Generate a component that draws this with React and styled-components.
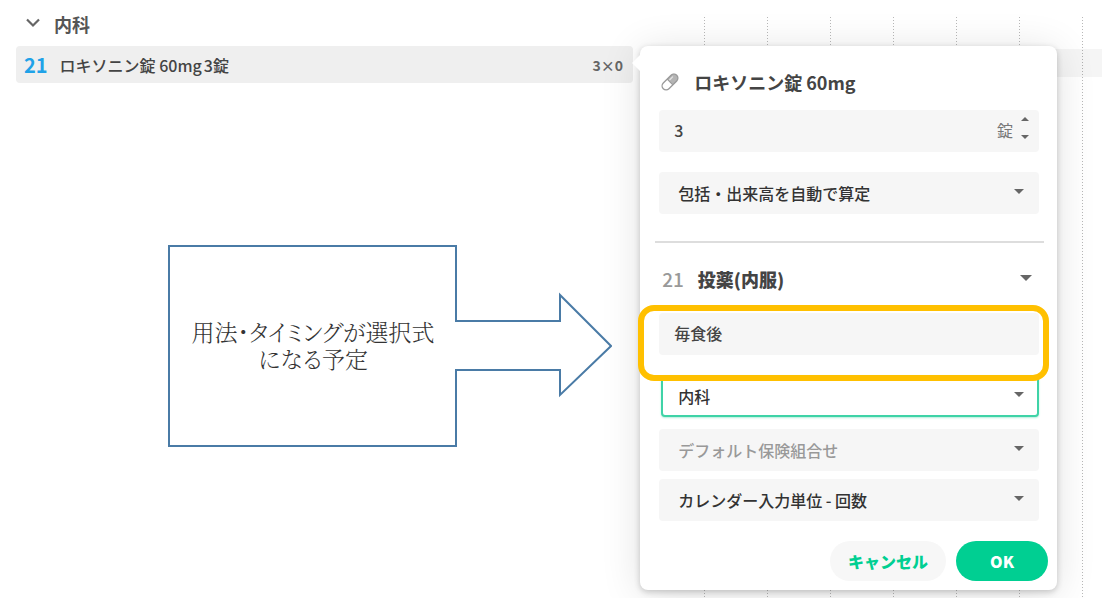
import { useState } from "react";
import styled, { createGlobalStyle } from "styled-components";

const GlobalStyle = createGlobalStyle`
  *, *::before, *::after { box-sizing: border-box; }

  body {
    margin: 0;
    background: #ffffff;
    color: #444444;
    font-family: 'Noto Sans CJK JP', sans-serif;
    font-size: 16px;
    line-height: 24px;
  }

  button, input, select {
    margin: 0;
    padding: 0;
    border: 0;
    background: none;
    color: inherit;
    font: inherit;
  }
`;

const Page = styled.main`
  display: grid;
  grid-template-columns: 4fr 3fr;
  min-height: 100vh;
  overflow: hidden;
`;

const Orders = styled.section`
  padding: 10px 0 0 16px;
`;

const DepartmentHeader = styled.button`
  display: flex;
  align-items: center;
  gap: 14px;
  height: 28px;
  padding-left: 10px;
  color: #555555;
  cursor: pointer;

  svg { margin-bottom: 3px; }

  h2 {
    margin: 0;
    font-size: 18px;
    font-weight: 700;
  }
`;

const OrderRow = styled.div`
  display: flex;
  align-items: center;
  height: 37px;
  margin-top: 8px;
  padding: 0 10px 0 8px;
  border-radius: 4px;
  background: #efefef;
  font-weight: 500;
`;

const OrderCode = styled.span`
  margin-right: 12px;
  color: #1fa2e8;
  font-size: 20px;
  font-weight: 700;
`;

const OrderName = styled.span`
  flex: 1;

  span { margin-left: 2px; }
`;

const OrderCount = styled.span`
  color: #666666;
  font-size: 14px;
  font-weight: 700;
`;

const Callout = styled.div`
  position: relative;
  width: 444px;
  height: 202px;
  margin: 162px 0 0 152px;

  svg { position: absolute; inset: 0; }
`;

const CalloutText = styled.p`
  position: relative;
  display: flex;
  align-items: center;
  justify-content: center;
  width: 290px;
  height: 100%;
  margin: 0;
  padding-bottom: 2px;
  color: #333333;
  font-family: 'Noto Serif CJK JP', 'Noto Sans CJK JP', serif;
  font-size: 23px;
  font-weight: 300;
  line-height: 27px;
  font-feature-settings: 'palt';
  text-align: center;
`;

const CalendarArea = styled.section`
  position: relative;
  padding: 17px 6px 0 8px;
`;

const Calendar = styled.div`
  height: 100%;
  margin-left: 63px;
  padding-top: 32px;
  background: linear-gradient(to bottom, transparent 1px, #ffffff 1px) 0 0 / 100% 3px,
    linear-gradient(to right, #b8b8b8 1px, transparent 1px) 0 0 / 63px 100%;
`;

const CalendarRow = styled.div`
  height: 28px;
  background: rgba(0, 0, 0, 0.04);
`;

const Popover = styled.form`
  position: absolute;
  top: 46px;
  left: 7px;
  right: 51px;
  padding: 22px 18px 9px 19px;
  border-radius: 8px;
  background: #ffffff;
  box-shadow: 0 2px 6px rgba(0, 0, 0, 0.2), 0 4px 40px rgba(0, 0, 0, 0.12);

  &::before {
    content: '';
    position: absolute;
    top: 9px;
    left: -8px;
    border: solid transparent;
    border-width: 8px 8px 8px 0;
    border-right-color: #ffffff;
  }
`;

const PopoverTitle = styled.h3`
  display: flex;
  align-items: center;
  gap: 15px;
  height: 28px;
  margin: 0 0 14px 2px;
  font-size: 18px;
  font-weight: 700;
`;

const Field = styled.div`
  position: relative;
  display: flex;
  align-items: center;
  height: 42px;
  margin-bottom: ${({ $gap }) => $gap || 0}px;
  border-radius: 4px;
  background: #f6f6f6;
  font-weight: 500;
`;

const TextInput = styled.input`
  flex: 1;
  min-width: 0;
  height: 100%;
  padding: 0 0 2px 15px;
  outline: none;
`;

const Unit = styled.span`
  padding-bottom: 2px;
  color: #777777;
  font-weight: 400;
`;

const Stepper = styled.div`
  display: flex;
  flex-direction: column;
  justify-content: space-between;
  height: 22px;
  margin: 0 10px 6px 8px;

  button {
    display: flex;
    cursor: pointer;
  }
`;

const SelectField = styled(Field)`
  color: ${({ $muted }) => ($muted ? "#999999" : "#333333")};

  ${({ $active }) => $active && `
    background: #ffffff;
    border: 2px solid #3fd3a7;
    box-shadow: 0 1px 2px #b5eedb;
    margin-left: 2px;
  `}

  select {
    width: 100%;
    height: 100%;
    padding: 0 36px 0 ${({ $active }) => ($active ? 15 : 19)}px;
    appearance: none;
    outline: none;
  }

  svg {
    position: absolute;
    top: ${({ $active }) => ($active ? 15 : 17)}px;
    right: ${({ $active }) => ($active ? 13 : 15)}px;
    pointer-events: none;
  }
`;

const Divider = styled.hr`
  height: 2px;
  margin: 0 -5px 22px -4px;
  border: 0;
  background: #dddddd;
`;

const SectionToggle = styled.button`
  display: flex;
  align-items: center;
  width: 100%;
  height: 28px;
  margin-bottom: 20px;
  padding: 0 7px 0 3px;
  font-size: 18px;
  font-weight: 700;
  text-align: left;
  cursor: pointer;

  span {
    margin-right: 14px;
    color: #999999;
    font-size: 19px;
    font-weight: 500;
  }

  strong { flex: 1; }

  svg { margin-bottom: 3px; }
`;

const Highlight = styled.div`
  position: absolute;
  z-index: 1;
  inset: -8px -10px -26px -21px;
  border: 6px solid #ffc000;
  border-radius: 16px;
  pointer-events: none;
`;

const Actions = styled.div`
  display: flex;
  justify-content: flex-end;
  gap: 10px;
  margin-right: -9px;
`;

const ActionButton = styled.button`
  height: 40px;
  padding: 0 ${({ $primary }) => ($primary ? 34 : 18)}px;
  border-radius: 20px;
  background: ${({ $primary }) => ($primary ? "#00cf92" : "#f7f7f7")};
  color: ${({ $primary }) => ($primary ? "#ffffff" : "#00cf92")};
  font-weight: 900;
  cursor: pointer;
`;

function Caret({ width = 10, up = false }) {
  const height = Math.ceil(width / 2);
  const points = up
    ? `0,${height} ${width},${height} ${width / 2},0`
    : `0,0 ${width},0 ${width / 2},${height}`;
  return (
    <svg width={width} height={height} aria-hidden="true">
      <polygon points={points} fill="#666666" />
    </svg>
  );
}

function PillIcon() {
  return (
    <svg width="18" height="18" viewBox="0 0 18 18" fill="none" aria-hidden="true">
      <g transform="rotate(-45 9 9)">
        <path d="M9 5h5.5a4 4 0 0 1 0 8H9z" fill="#b4b4b4" />
        <rect x="-0.5" y="5" width="19" height="8" rx="4" stroke="#999999" strokeWidth="1.3" />
        <path d="M9 5v8" stroke="#999999" />
        <path d="M10.5 7.2h4" stroke="#e4e4e4" strokeWidth="1.3" strokeLinecap="round" />
      </g>
    </svg>
  );
}

function Select({ label, options, ...rest }) {
  return (
    <SelectField {...rest}>
      <select aria-label={label}>
        {options.map((option) => (
          <option key={option}>{option}</option>
        ))}
      </select>
      <Caret />
    </SelectField>
  );
}

export default function App() {
  const [amount, setAmount] = useState(3);
  const [usage, setUsage] = useState("毎食後");

  return (
    <Page>
      <GlobalStyle />
      <Orders>
        <DepartmentHeader type="button">
          <svg width="14" height="10" fill="none" aria-hidden="true">
            <path d="M1 1.5l6 6 6-6" stroke="#666666" strokeWidth="2.2" />
          </svg>
          <h2>内科</h2>
        </DepartmentHeader>
        <OrderRow>
          <OrderCode>21</OrderCode>
          <OrderName>ロキソニン錠 60mg<span>3錠</span></OrderName>
          <OrderCount>3×0</OrderCount>
        </OrderRow>
        <Callout>
          <svg width="444" height="202" fill="none" aria-hidden="true">
            <path d="M1 1H288V76H392V50L443 101L392 150V125H288V201H1Z" stroke="#4a7ba6" strokeWidth="2" />
          </svg>
          <CalloutText>用法・タイミングが選択式<br />になる予定</CalloutText>
        </Callout>
      </Orders>

      <CalendarArea>
        <Calendar>
          <CalendarRow />
        </Calendar>
        <Popover onSubmit={(e) => e.preventDefault()}>
          <PopoverTitle>
            <PillIcon />
            ロキソニン錠 60mg
          </PopoverTitle>
          <Field $gap={20}>
            <TextInput aria-label="数量" value={amount} onChange={(e) => setAmount(e.target.value)} />
            <Unit>錠</Unit>
            <Stepper>
              <button type="button" aria-label="増やす" onClick={() => setAmount(Number(amount) + 1)}>
                <Caret width={8} up />
              </button>
              <button type="button" aria-label="減らす" onClick={() => setAmount(Number(amount) - 1)}>
                <Caret width={8} />
              </button>
            </Stepper>
          </Field>
          <Select label="算定方法" options={["包括・出来高を自動で算定"]} $gap={27} />
          <Divider />
          <SectionToggle type="button">
            <span>21</span>
            <strong>投薬(内服)</strong>
            <Caret width={12} />
          </SectionToggle>
          <Field $gap={20}>
            <TextInput aria-label="用法" value={usage} onChange={(e) => setUsage(e.target.value)} />
            <Highlight />
          </Field>
          <Select label="診療科" options={["内科"]} $gap={12} $active />
          <Select label="保険組合せ" options={["デフォルト保険組合せ"]} $gap={8} $muted />
          <Select label="カレンダー入力単位" options={["カレンダー入力単位 - 回数"]} $gap={20} />
          <Actions>
            <ActionButton type="button">キャンセル</ActionButton>
            <ActionButton type="submit" $primary>OK</ActionButton>
          </Actions>
        </Popover>
      </CalendarArea>
    </Page>
  );
}
